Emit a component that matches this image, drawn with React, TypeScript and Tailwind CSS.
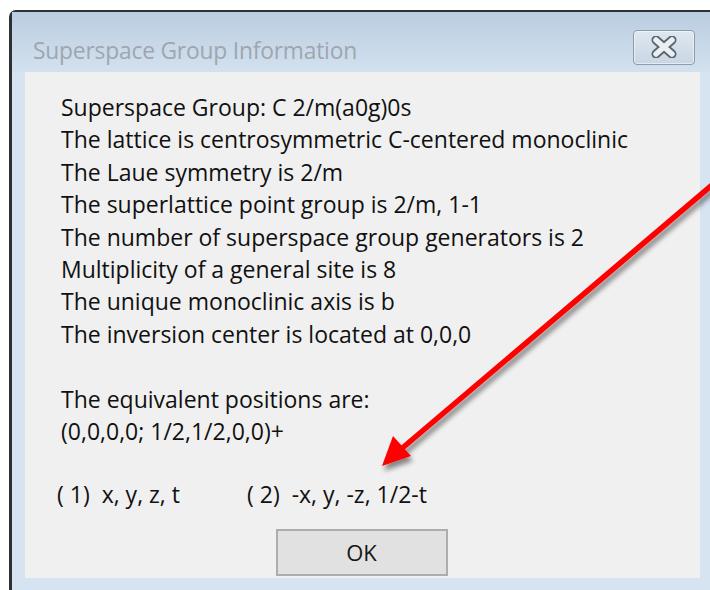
import React from 'react';

const lines = [
  'Superspace Group: C 2/m(a0g)0s',
  'The lattice is centrosymmetric C-centered monoclinic',
  'The Laue symmetry is 2/m',
  'The superlattice point group is 2/m, 1-1',
  'The number of superspace group generators is 2',
  'Multiplicity of a general site is 8',
  'The unique monoclinic axis is b',
  'The inversion center is located at 0,0,0',
];

const CloseButton: React.FC = () => (
  <div className="w-[62px] h-[35px] rounded-[4px] border border-[#8d9bad] bg-gradient-to-b from-[#dfe7f0] to-[#c9d6e4] flex items-center justify-center shadow-[inset_0_0_0_1px_rgba(255,255,255,0.5)]">
    <svg width="30" height="22" viewBox="0 0 30 22">
      <path d="M7 4 L23 18 M23 4 L7 18" stroke="#5a646e" strokeWidth="9" strokeLinecap="round" />
      <path d="M7 4 L23 18 M23 4 L7 18" stroke="#eceff2" strokeWidth="5.5" strokeLinecap="round" />
    </svg>
  </div>
);

const Arrow: React.FC = () => (
  <svg className="absolute left-0 top-0 pointer-events-none" width="710" height="590" viewBox="0 0 710 590">
    <defs>
      <filter id="drop" x="-20%" y="-20%" width="140%" height="140%">
        <feGaussianBlur in="SourceAlpha" stdDeviation="2.5" />
        <feOffset dx="2" dy="5" result="blur" />
        <feComponentTransfer>
          <feFuncA type="linear" slope="0.45" />
        </feComponentTransfer>
        <feMerge>
          <feMergeNode />
          <feMergeNode in="SourceGraphic" />
        </feMerge>
      </filter>
    </defs>
    <g filter="url(#drop)">
      <line x1="725" y1="174" x2="400" y2="450" stroke="#ff0000" strokeWidth="5.5" />
      <polygon points="382,466 393,436 411,456" fill="#ff0000" />
    </g>
  </svg>
);

export default function App() {
  return (
    <div className="relative w-[710px] h-[590px] overflow-hidden bg-white pt-[10px] pl-[9px]">
      <div className="w-[720px] h-[600px] rounded-tl-[7px] border-t-2 border-l-[3px] border-[#2f3033] bg-[#d6e3f1] flex flex-col">
        <div className="h-[60px] shrink-0 flex items-center justify-between pl-[21px] pr-[34px] bg-gradient-to-b from-[#bacde0] to-[#d3e1ef]">
          <span className="text-[22.8px] text-[#9ea6ae] font-['Open_Sans',sans-serif] tracking-[-0.2px] mt-[18px]">
            Superspace Group Information
          </span>
          <div className="mt-[10px]">
            <CloseButton />
          </div>
        </div>
        <div className="ml-[13px] w-[675px] h-[506px] bg-[#f0f0f0] font-['Open_Sans',sans-serif] text-[23px] text-[#111111] flex flex-col">
          <div className="pl-[36px] pt-[19px] leading-[32.4px]">
            {lines.map((l) => (
              <div key={l}>{l}</div>
            ))}
            <div className="h-[32.4px]" />
            <div>The equivalent positions are:</div>
            <div>(0,0,0,0; 1/2,1/2,0,0)+</div>
          </div>
          <div className="flex pl-[32px] mt-[31px] leading-[32px]">
            <span className="w-[190px] whitespace-pre">( 1)  x, y, z, t</span>
            <span className="whitespace-pre">( 2)  -x, y, -z, 1/2-t</span>
          </div>
          <div className="flex justify-center mt-[auto] mb-[2px] pr-[2px]">
            <button className="w-[172px] h-[47px] border-2 border-[#adadad] bg-[#e1e1e1] text-[22px] text-[#151515] flex items-center justify-center">
              OK
            </button>
          </div>
        </div>
      </div>
      <Arrow />
    </div>
  );
}
